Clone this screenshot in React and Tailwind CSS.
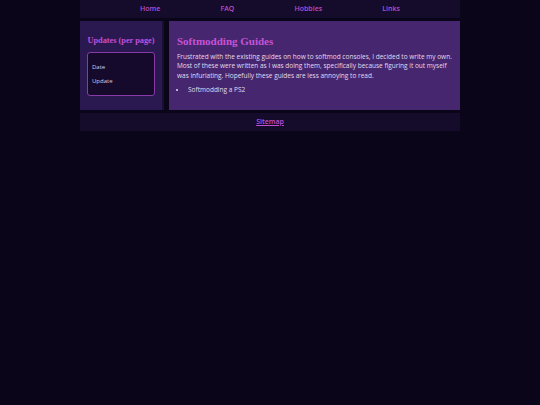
import React from "react";

const links = ["Home", "FAQ", "Hobbies", "Links"];

const App = () => {
  return (
    <div
      className="min-h-[405px] w-full bg-[#0b0519]"
      style={{ fontFamily: "'Open Sans', Lato, sans-serif" }}
    >
      <div className="mx-auto w-[380px]">
        <nav className="flex h-[18px] items-center justify-around bg-[#150b2a] px-[30px]">
          {links.map((l) => (
            <a key={l} className="text-[7px] font-semibold text-[#b64fd2]">
              {l}
            </a>
          ))}
        </nav>
        <div className="mt-[3px] flex gap-[5px] bg-[#0b0519]">
          <aside className="flex h-[89px] w-[84px] flex-col items-center border-r-2 border-[#1a0e33] bg-[#2a1850] pt-[14px]">
            <h3
              className="whitespace-nowrap text-[8.3px] font-bold text-[#c24fd4]"
              style={{ fontFamily: "'Liberation Serif', serif" }}
            >
              Updates (per page)
            </h3>
            <div className="mt-[5px] h-[44px] w-[68px] rounded-[3px] border border-[#8a3aa8] bg-[#150a2b] px-[4px] pt-[7px] text-[6px] leading-[14px] text-[#d8cce8]">
              <p>Date</p>
              <p>Update</p>
            </div>
          </aside>
          <main className="h-[89px] flex-1 bg-[#45266f] px-[8px] pt-[13px]">
            <h2
              className="text-[11px] font-bold leading-[14px] text-[#c753d6]"
              style={{ fontFamily: "'Liberation Serif', serif" }}
            >
              Softmodding Guides
            </h2>
            <p className="mt-[4px] text-[6.5px] leading-[9.3px] text-[#e4dcee]">
              Frustrated with the existing guides on how to softmod consoles, I
              decided to write my own. Most of these were written as I was doing
              them, specifically because figuring it out myself was infuriating.
              Hopefully these guides are less annoying to read.
            </p>
            <ul className="mt-[5px] list-disc pl-[10px] text-[6.5px] text-[#e4dcee]">
              <li className="pl-[1px]">Softmodding a PS2</li>
            </ul>
          </main>
        </div>
        <footer className="mt-[3px] flex h-[18px] items-center justify-center bg-[#150b2a]">
          <a className="text-[7px] font-semibold text-[#c04fd6] underline">
            Sitemap
          </a>
        </footer>
      </div>
    </div>
  );
};

export default App;
